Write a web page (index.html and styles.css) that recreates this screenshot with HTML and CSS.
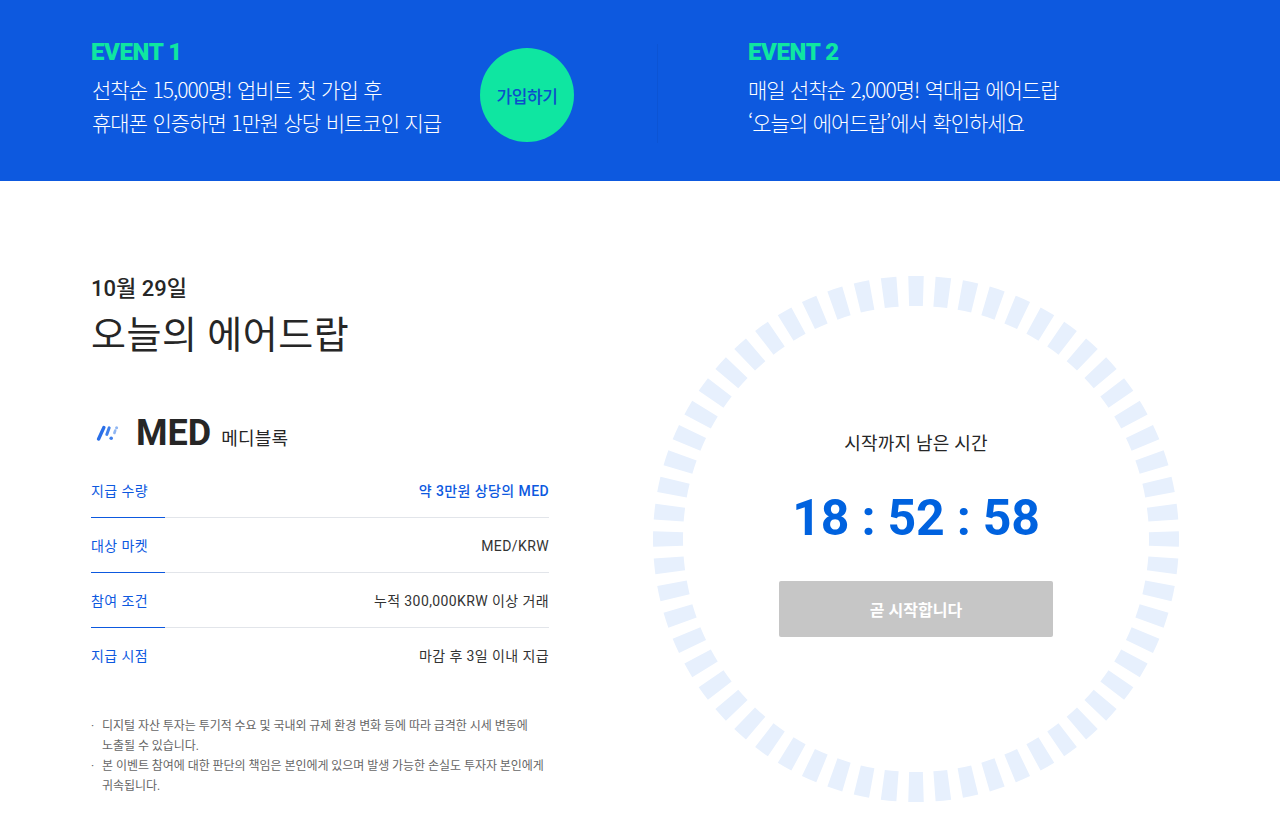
FILE: index.html
```html
<!DOCTYPE html>
<html lang="ko">
<head>
    <meta charset="UTF-8">
    <title>오늘의 에어드랍</title>
    <link rel="stylesheet" href="styles.css">
</head>
<body>
<section class="banner">
    <div class="event event-first">
        <div class="event-text">
            <h2>EVENT 1</h2>
            <p>선착순 15,000명! 업비트 첫 가입 후<br>휴대폰 인증하면 1만원 상당 비트코인 지급</p>
        </div>
        <a class="join" href="#">가입하기</a>
    </div>
    <div class="event event-second">
        <div class="event-text">
            <h2>EVENT 2</h2>
            <p>매일 선착순 2,000명! 역대급 에어드랍<br>‘오늘의 에어드랍’에서 확인하세요</p>
        </div>
    </div>
</section>

<main class="main">
    <div class="detail">
        <div class="date">10월 29일</div>
        <h1>오늘의 에어드랍</h1>
        <div class="coin">
            <svg class="coin-icon" viewBox="0 0 24 16" width="24" height="16">
                <path d="M2.6 14 L7.8 2.6" stroke="#2a6fe8" stroke-width="3.4" stroke-linecap="round"/>
                <path d="M10.8 9.4 L13.2 2.8" stroke="#3f80ec" stroke-width="3" stroke-linecap="round"/>
                <circle cx="15.2" cy="13.2" r="1.8" fill="#3f80ec"/>
                <path d="M18.4 8 L19.2 5.6" stroke="#8fb6f3" stroke-width="2.6" stroke-linecap="round"/>
                <circle cx="20.6" cy="2.8" r="1.5" fill="#8fb6f3"/>
            </svg>
            <strong>MED</strong>
            <span>메디블록</span>
        </div>
        <dl class="info">
            <div class="info-row">
                <dt>지급 수량</dt>
                <dd class="point">약 3만원 상당의 MED</dd>
            </div>
            <div class="info-row">
                <dt>대상 마켓</dt>
                <dd>MED/KRW</dd>
            </div>
            <div class="info-row">
                <dt>참여 조건</dt>
                <dd>누적 300,000KRW 이상 거래</dd>
            </div>
            <div class="info-row">
                <dt>지급 시점</dt>
                <dd>마감 후 3일 이내 지급</dd>
            </div>
        </dl>
        <ul class="notes">
            <li>디지털 자산 투자는 투기적 수요 및 국내외 규제 환경 변화 등에 따라 급격한 시세 변동에 노출될 수 있습니다.</li>
            <li>본 이벤트 참여에 대한 판단의 책임은 본인에게 있으며 발생 가능한 손실도 투자자 본인에게 귀속됩니다.</li>
        </ul>
    </div>

    <div class="timer">
        <svg class="ring" viewBox="0 0 526 526" width="526" height="526">
            <circle cx="263" cy="263" r="248" fill="none" stroke="#e7f0fd" stroke-width="30"
                    pathLength="600" stroke-dasharray="5.7 4.3" stroke-dashoffset="2.85"/>
        </svg>
        <div class="timer-label">시작까지 남은 시간</div>
        <div class="timer-count">18 : 52 : 58</div>
        <button class="timer-btn" type="button">곧 시작합니다</button>
    </div>
</main>
</body>
</html>
```

FILE: styles.css
```css
* {
    box-sizing: border-box;
}
body {
    margin: 0;
    background: #fff;
    color: #262626;
    font-family: Roboto, "Noto Sans CJK KR", sans-serif;
}

.banner {
    display: flex;
    height: 181px;
    padding-top: 44px;
    background-color: #0d59df;
}
.event {
    display: flex;
    height: 99px;
}
.event-first {
    width: 658px;
    padding-left: 91px;
    border-right: 1px solid #0c54d4;
}
.event-first .event-text {
    width: 349px;
}
.event-first p {
    margin-left: 1px;
}
.event-second {
    padding-left: 90px;
}
.event-text h2 {
    margin: 0;
    color: #0fe6a1;
    font-size: 24px;
    line-height: 17px;
    font-weight: 900;
    letter-spacing: -0.4px;
}
.event-text p {
    margin-top: 12px;
    margin-bottom: 0;
    color: #fff;
    font-family: "Noto Sans CJK KR", sans-serif;
    font-size: 21px;
    font-weight: 300;
    line-height: 33px;
    letter-spacing: -1px;
    word-spacing: 0.6px;
    white-space: nowrap;
}
.join {
    display: flex;
    align-items: center;
    justify-content: center;
    width: 94px;
    height: 94px;
    margin: 4px 0 0 40px;
    border-radius: 50%;
    background-color: #0fe6a1;
    color: #0b4fcb;
    font-size: 17px;
    font-weight: 500;
    letter-spacing: -0.4px;
    text-decoration: none;
}

.main {
    display: flex;
    padding: 95px 0 0 91px;
}
.detail {
    width: 458px;
}
.date {
    padding-top: 1px;
    font-size: 22px;
    font-weight: 500;
    line-height: 24px;
}
h1 {
    margin: 11px 0 0;
    font-size: 38px;
    font-weight: 400;
    line-height: 46px;
    letter-spacing: 0.5px;
}
.coin {
    display: flex;
    align-items: baseline;
    height: 44px;
    margin-top: 53px;
}
.coin-icon {
    align-self: center;
    margin: 0 16px 0 5px;
}
.coin strong {
    font-size: 36px;
    font-weight: 700;
    line-height: 44px;
}
.coin span {
    margin-left: 10px;
    font-size: 18px;
    letter-spacing: 0.2px;
}
.info {
    margin: 8px 0 0;
}
.info-row {
    display: flex;
    justify-content: space-between;
    height: 55px;
    padding-top: 18px;
    border-bottom: 1px solid #e2e5ea;
    font-size: 14px;
    line-height: 20px;
    letter-spacing: 0.4px;
}
.info-row:last-child {
    border-bottom: 0;
}
.info-row dt {
    width: 74px;
    height: 37px;
    border-bottom: 1px solid #0d59df;
    color: #0d59df;
}
.info-row:last-child dt {
    border-bottom: 0;
}
.info-row dd {
    margin: 0;
    color: #333;
}
.info-row .point {
    color: #0d59df;
    font-weight: 500;
}
.notes {
    margin: 33px 0 0;
    padding: 0;
    list-style: none;
    color: #666;
    font-size: 12px;
    line-height: 20px;
    letter-spacing: -0.05px;
    word-break: keep-all;
}
.notes li {
    position: relative;
    padding: 0 0 0 11px;
}
.notes li::before {
    content: "·";
    position: absolute;
    left: 0;
}

.timer {
    position: relative;
    display: flex;
    flex-direction: column;
    align-items: center;
    width: 526px;
    height: 526px;
    margin-left: 104px;
    padding-top: 156px;
}
.ring {
    position: absolute;
    left: 0;
    top: 0;
    transform: rotate(-90deg);
}
.timer-label {
    font-size: 18px;
    line-height: 24px;
    letter-spacing: 0.2px;
}
.timer-count {
    margin-top: 32px;
    color: #0062df;
    font-size: 50px;
    font-weight: 700;
    line-height: 60px;
    letter-spacing: -0.2px;
}
.timer-btn {
    width: 274px;
    height: 56px;
    margin-top: 33px;
    border: 0;
    border-radius: 2px;
    background-color: #c6c6c6;
    color: #fff;
    font-family: inherit;
    font-size: 16px;
    font-weight: 700;
}
```
